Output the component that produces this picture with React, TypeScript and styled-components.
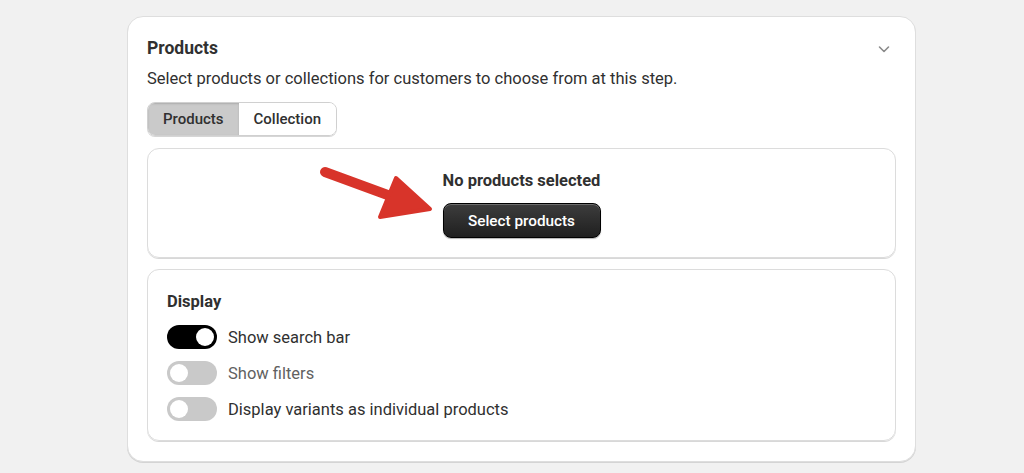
import React from "react";
import styled, { createGlobalStyle } from "styled-components";

const Global = createGlobalStyle`
  html, body { margin: 0; padding: 0; background: #f1f1f1; }
  body { font-family: Roboto, "Noto Sans", "Liberation Sans", sans-serif; color: #303030; }
  * { box-sizing: border-box; }
`;

const Page = styled.div`
  padding: 16px 0 0 127px;
  height: 473px;
`;

const Card = styled.section`
  width: 789px;
  background: #fff;
  border: 1px solid #dedede;
  border-radius: 16px;
  box-shadow: 0 1px 0 #d4d4d4;
  padding: 20px 20px 20px 19px;
  display: flex;
  flex-direction: column;
`;

const Header = styled.div`
  display: flex;
  align-items: center;
  justify-content: space-between;
  height: 22px;
`;

const Title = styled.h2`
  margin: 0;
  font-size: 17.5px;
  font-weight: 700;
  line-height: 22px;
`;

const Chevron = styled.span`
  display: flex;
  color: #8a8a8a;
  margin-right: 3px;
  margin-top: 2px;
`;

const Subtitle = styled.p`
  margin: 9px 0 0;
  font-size: 16.5px;
  line-height: 22px;
`;

const Segmented = styled.div`
  margin-top: 12px;
  display: inline-flex;
  align-self: flex-start;
  border: 1px solid #d0d0d0;
  border-radius: 8px;
  overflow: hidden;
  height: 34px;
  box-shadow: 0 1px 0 #d6d6d6;
`;

const Segment = styled.button<{ $active?: boolean }>`
  border: none;
  margin: 0;
  font-family: inherit;
  font-size: 15px;
  font-weight: 500;
  color: #303030;
  padding: 0 15px;
  background: ${(p) => (p.$active ? "#cacaca" : "#fff")};
  box-shadow: ${(p) => (p.$active ? "inset 0 1px 2px rgba(0,0,0,0.15)" : "none")};
  cursor: pointer;
`;

const Box = styled.div`
  position: relative;
  border: 1px solid #dcdcdc;
  border-radius: 12px;
  box-shadow: 0 1px 0 #d8d8d8;
  width: 749px;
`;

const EmptyBox = styled(Box)`
  margin-top: 12px;
  height: 110px;
  display: flex;
  flex-direction: column;
  align-items: center;
  padding-top: 21px;
`;

const EmptyText = styled.div`
  font-size: 16.5px;
  font-weight: 700;
  line-height: 22px;
`;

const PrimaryButton = styled.button`
  margin-top: 11px;
  width: 158px;
  height: 35px;
  border-radius: 8px;
  border: 1px solid #000;
  background: linear-gradient(#3d3d3d, #1f1f1f);
  box-shadow: inset 0 1px 0 rgba(255,255,255,0.25), 0 1px 1px rgba(0,0,0,0.3);
  color: #fff;
  font-family: inherit;
  font-size: 15.3px;
  font-weight: 500;
  cursor: pointer;
`;

const Arrow = styled.svg`
  position: absolute;
  left: 168px;
  top: 12px;
`;

const DisplayBox = styled(Box)`
  margin-top: 11px;
  padding: 22px 19px 19px;
  display: flex;
  flex-direction: column;
`;

const SectionTitle = styled.h3`
  margin: 0;
  font-size: 16.5px;
  font-weight: 700;
  line-height: 20px;
`;

const Options = styled.div`
  margin-top: 13px;
  display: flex;
  flex-direction: column;
  gap: 12px;
`;

const Row = styled.label`
  display: flex;
  align-items: center;
  gap: 11px;
  height: 24px;
`;

const Toggle = styled.span<{ $on?: boolean }>`
  position: relative;
  width: 50px;
  height: 24px;
  border-radius: 12px;
  background: ${(p) => (p.$on ? "#000" : "#c9c9c9")};
  flex-shrink: 0;
  &::after {
    content: "";
    position: absolute;
    top: 3px;
    left: ${(p) => (p.$on ? "29px" : "3px")};
    width: 18px;
    height: 18px;
    border-radius: 50%;
    background: #fff;
  }
`;

const RowLabel = styled.span<{ $muted?: boolean }>`
  font-size: 16.5px;
  color: ${(p) => (p.$muted ? "#616161" : "#303030")};
`;

export default function App() {
  return (
    <Page>
      <Global />
      <Card>
        <Header>
          <Title>Products</Title>
          <Chevron>
            <svg width="16" height="16" viewBox="0 0 16 16" fill="none">
              <path d="M3.5 6l4.5 4.5L12.5 6" stroke="currentColor" strokeWidth="1.6" strokeLinecap="round" strokeLinejoin="round" />
            </svg>
          </Chevron>
        </Header>
        <Subtitle>Select products or collections for customers to choose from at this step.</Subtitle>
        <Segmented>
          <Segment $active>Products</Segment>
          <Segment>Collection</Segment>
        </Segmented>
        <EmptyBox>
          <Arrow width="125" height="65" viewBox="0 0 125 65">
            <line x1="9" y1="11" x2="88" y2="40" stroke="#d8342a" strokeWidth="10" strokeLinecap="round" />
            <path d="M80 17 L114 48 L64 56 Z" fill="#d8342a" stroke="#d8342a" strokeWidth="4" strokeLinejoin="round" />
          </Arrow>
          <EmptyText>No products selected</EmptyText>
          <PrimaryButton>Select products</PrimaryButton>
        </EmptyBox>
        <DisplayBox>
          <SectionTitle>Display</SectionTitle>
          <Options>
            <Row>
              <Toggle $on />
              <RowLabel>Show search bar</RowLabel>
            </Row>
            <Row>
              <Toggle />
              <RowLabel $muted>Show filters</RowLabel>
            </Row>
            <Row>
              <Toggle />
              <RowLabel>Display variants as individual products</RowLabel>
            </Row>
          </Options>
        </DisplayBox>
      </Card>
    </Page>
  );
}
